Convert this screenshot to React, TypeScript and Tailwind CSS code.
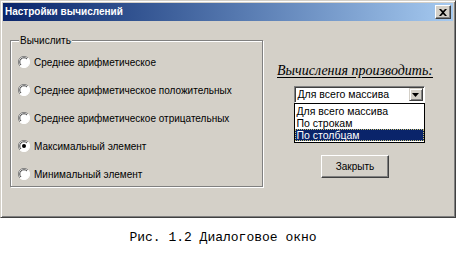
import React from "react";

const options = [
  "Среднее арифметическое",
  "Среднее арифметическое положительных",
  "Среднее арифметическое отрицательных",
  "Максимальный элемент",
  "Минимальный элемент",
];

const listItems = ["Для всего массива", "По строкам", "По столбцам"];

const Radio: React.FC<{ checked?: boolean }> = ({ checked }) => (
  <svg width="12" height="12" viewBox="0 0 12 12" className="shrink-0">
    <circle cx="6" cy="6" r="5.5" fill="#ffffff" />
    <path d="M10 2 A5.5 5.5 0 0 0 2 10" fill="none" stroke="#808080" strokeWidth="1" />
    <path d="M9 3 A4.2 4.2 0 0 0 3 9" fill="none" stroke="#404040" strokeWidth="1" />
    <path d="M2 10 A5.5 5.5 0 0 0 10 2" fill="none" stroke="#ffffff" strokeWidth="1" />
    {checked && <circle cx="6" cy="6" r="2" fill="#000000" />}
  </svg>
);

const App: React.FC = () => {
  return (
    <div className="w-[456px] h-[258px] bg-white font-['Liberation_Sans',Arial,sans-serif] text-[10px] text-black">
      {/* Dialog window */}
      <div className="h-[218px] bg-[#d4d0c8] border-t border-l border-[#d4d0c8] border-r border-b border-r-[#404040] border-b-[#404040] shadow-[inset_1px_1px_0_#ffffff,inset_-1px_-1px_0_#808080] p-[2px] flex flex-col">
        {/* Title bar */}
        <div className="h-[18px] flex items-center justify-between pl-[2px] pr-[2px] bg-gradient-to-r from-[#0a246a] to-[#a6caf0]">
          <span className="text-white font-bold text-[10px] leading-none">Настройки вычислений</span>
          <div className="w-[16px] h-[14px] bg-[#d4d0c8] border-t border-l border-white border-r border-b border-r-[#404040] border-b-[#404040] shadow-[inset_-1px_-1px_0_#808080] flex items-center justify-center">
            <svg width="8" height="7" viewBox="0 0 8 7">
              <path d="M0 0h2l2 2 2-2h2L5 3.5 8 7H6L4 5 2 7H0l3-3.5z" fill="#000" />
            </svg>
          </div>
        </div>

        {/* Body */}
        <div className="flex pt-[13px] pl-[7px]">
          <fieldset className="w-[253px] h-[153px] border border-[#808080] shadow-[inset_1px_1px_0_#ffffff,1px_1px_0_#ffffff] px-0 pb-0">
            <legend className="ml-[8px] px-[1px] leading-[13px] bg-[#d4d0c8]">Вычислить</legend>
            <div className="flex flex-col pl-[7px] mt-[1px]">
              {options.map((o, i) => (
                <div key={o} className="h-[28px] flex items-center gap-[4px]">
                  <Radio checked={i === 3} />
                  <span>{o}</span>
                </div>
              ))}
            </div>
          </fieldset>

          {/* Right column */}
          <div className="w-[164px] ml-[14px] flex flex-col items-center pt-[28px]">
            <span className="mr-[8px] whitespace-nowrap font-['Liberation_Serif',serif] italic text-[14px] leading-[17px] underline underline-offset-2">
              Вычисления производить:
            </span>
            <div className="mt-[7px] w-[131px] flex flex-col text-[10.5px]">
              <div className="h-[17px] bg-white border-t border-l border-[#808080] border-r border-b border-r-white border-b-white shadow-[inset_1px_1px_0_#404040] flex items-center justify-between pl-[3px] pr-[1px]">
                <span>Для всего массива</span>
                <div className="w-[14px] h-[13px] bg-[#d4d0c8] border-t border-l border-[#d4d0c8] border-r border-b border-r-[#404040] border-b-[#404040] shadow-[inset_1px_1px_0_#ffffff,inset_-1px_-1px_0_#808080] flex items-center justify-center">
                  <svg width="7" height="4" viewBox="0 0 7 4">
                    <path d="M0 0h7L3.5 4z" fill="#000" />
                  </svg>
                </div>
              </div>
              <div className="bg-white border border-black flex flex-col py-[1px]">
                {listItems.map((it, i) => (
                  <div
                    key={it}
                    className={
                      i === 2
                        ? "h-[12px] leading-[10px] pl-[1px] bg-[#0a246a] text-white border border-dotted border-[#c8c070]"
                        : "h-[12px] leading-[12px] pl-[2px]"
                    }
                  >
                    {it}
                  </div>
                ))}
              </div>
            </div>
            <button className="mt-[12px] mr-[8px] w-[68px] h-[23px] bg-[#d4d0c8] border-t border-l border-white border-r border-b border-r-[#404040] border-b-[#404040] shadow-[inset_-1px_-1px_0_#808080] text-[10px]">
              Закрыть
            </button>
          </div>
        </div>
      </div>

      {/* Caption */}
      <div className="h-[40px] flex items-center justify-center pr-[10px]">
        <span className="font-['Liberation_Mono',monospace] text-[13px]">Рис.&nbsp;1.2&nbsp;Диалоговое окно</span>
      </div>
    </div>
  );
};

export default App;
